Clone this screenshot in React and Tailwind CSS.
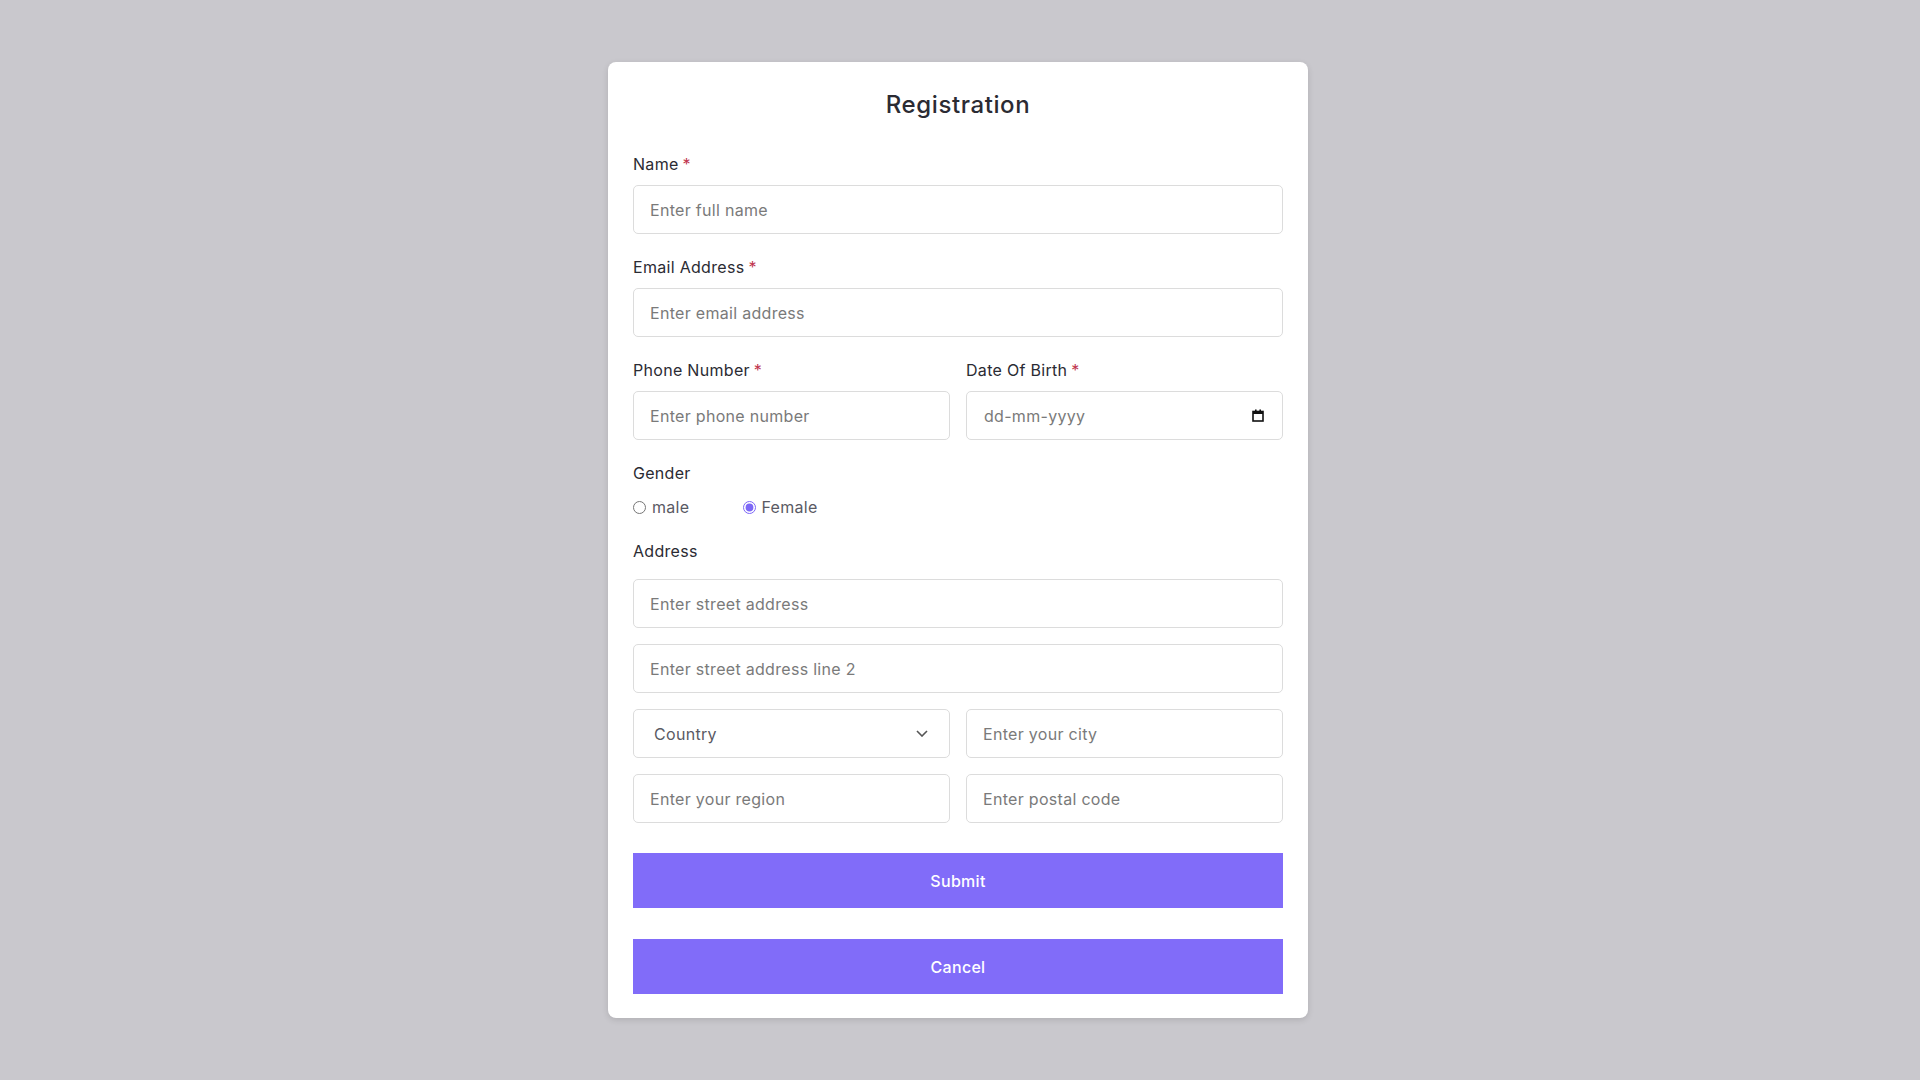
import React, { useState } from "react";

const inputClass =
  "h-[49px] w-full rounded-[5px] border border-[#dcdcdc] bg-white px-4 text-[16px] tracking-[0.3px] text-[#333] outline-none placeholder:text-[#7a7a7a]";

const Label = ({ children, required }) => (
  <p className="mb-[9px] text-[16px] leading-6 text-[#2b2b33]">
    {children}
    {required && <span className="ml-1 text-[#c0344d]">*</span>}
  </p>
);

const App = () => {
  const [gender, setGender] = useState("female");

  return (
    <div className="flex min-h-screen items-center justify-center bg-[#c9c8cd] font-['Inter',sans-serif] tracking-[0.3px]">
      <form
        onSubmit={(event) => event.preventDefault()}
        className="mr-1 w-[700px] rounded-[8px] bg-white px-[25px] pt-[25px] pb-[24px] shadow-[0_2px_6px_rgba(0,0,0,0.12)]"
      >
        <h1 className="mb-[29px] text-center text-[24px] leading-9 font-medium tracking-[0.6px] text-[#2b2b33]">
          Registration
        </h1>

        <div className="flex flex-col gap-[21px]">
          <div>
            <Label required>Name</Label>
            <input className={inputClass} placeholder="Enter full name" />
          </div>

          <div>
            <Label required>Email Address</Label>
            <input className={inputClass} placeholder="Enter email address" />
          </div>

          <div className="grid grid-cols-2 gap-4">
            <div>
              <Label required>Phone Number</Label>
              <input className={inputClass} placeholder="Enter phone number" />
            </div>
            <div>
              <Label required>Date Of Birth</Label>
              <div className="flex h-[49px] items-center justify-between rounded-[5px] border border-[#dcdcdc] pr-[18px] pl-[17px]">
                <span className="text-[16px] text-[#7a7a7a]">dd-mm-yyyy</span>
                <svg width="12" height="13" viewBox="0 0 12 13">
                  <rect x="1" y="2.5" width="10" height="9.5" fill="none" stroke="#111" strokeWidth="1.6" />
                  <rect x="1" y="2" width="10" height="3" fill="#111" />
                  <rect x="3" y="0.5" width="1.6" height="2.5" fill="#111" />
                  <rect x="7.4" y="0.5" width="1.6" height="2.5" fill="#111" />
                </svg>
              </div>
            </div>
          </div>

          <div>
            <p className="text-[16px] leading-6 text-[#2b2b33]">Gender</p>
            <div className="mt-[10px] flex h-6 items-center text-[16px] text-[#5a5a64]">
              <label className="flex items-center gap-[6px]">
                <input
                  type="radio"
                  name="gender"
                  checked={gender === "male"}
                  onChange={() => setGender("male")}
                  className="m-0 h-[13px] w-[13px] accent-[#7c67f6]"
                />
                male
              </label>
              <label className="ml-[54px] flex items-center gap-[5px]">
                <input
                  type="radio"
                  name="gender"
                  checked={gender === "female"}
                  onChange={() => setGender("female")}
                  className="m-0 h-[13px] w-[13px] accent-[#7c67f6]"
                />
                Female
              </label>
            </div>
          </div>
        </div>

        <p className="mt-[20px] mb-4 text-[16px] leading-6 text-[#2b2b33]">
          Address
        </p>
        <div className="flex flex-col gap-4">
          <input className={inputClass} placeholder="Enter street address" />
          <input className={inputClass} placeholder="Enter street address line 2" />
          <div className="grid grid-cols-2 gap-4">
            <div className="flex h-[49px] items-center justify-between rounded-[5px] border border-[#dcdcdc] pr-[21px] pl-5">
              <span className="text-[16px] text-[#5a5a64]">Country</span>
              <svg width="12" height="7" viewBox="0 0 12 7">
                <path d="M1 1l5 5 5-5" fill="none" stroke="#555" strokeWidth="1.6" />
              </svg>
            </div>
            <input className={inputClass} placeholder="Enter your city" />
          </div>
          <div className="grid grid-cols-2 gap-4">
            <input className={inputClass} placeholder="Enter your region" />
            <input className={inputClass} placeholder="Enter postal code" />
          </div>
        </div>

        <button
          type="submit"
          className="mt-[30px] block h-[55px] w-full bg-[#816cf9] text-[16px] font-medium text-white"
        >
          Submit
        </button>
        <button
          type="button"
          className="mt-[31px] block h-[55px] w-full bg-[#816cf9] text-[16px] font-medium text-white"
        >
          Cancel
        </button>
      </form>
    </div>
  );
};

export default App;
